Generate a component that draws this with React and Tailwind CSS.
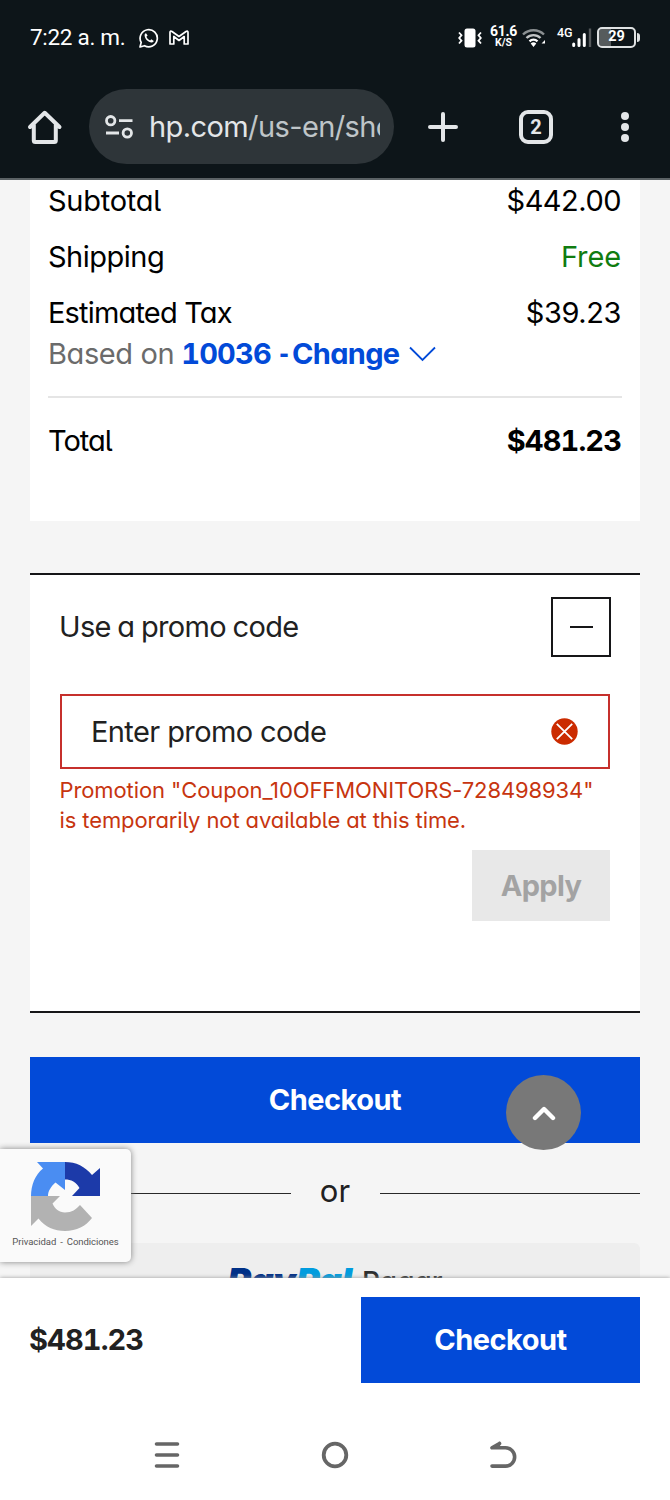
const hp = "font-['Inter','Liberation_Sans',sans-serif] [font-feature-settings:'cv11','cv05']";
const bold = "font-bold [font-feature-settings:'cv11','tnum']";
const roboto = "font-['Roboto','Liberation_Sans',sans-serif]";

function StatusBar() {
  return (
    <div className={`${roboto} flex h-[75px] items-center pl-[30px] pr-[30px] text-white`}>
      <span className="w-[109px] whitespace-nowrap text-[22.5px] tracking-[-0.3px] leading-none">7:22 a. m.</span>
      <svg className="h-5 w-5" viewBox="0 0 20 20" fill="none" stroke="#fff" strokeWidth="1.7">
        <path d="M1 19l1.2-4.6a8.6 8.6 0 1 1 3.3 3.3z" strokeLinejoin="round" />
        <path d="M7 5.2c-.9.3-1.5 1.2-1.4 2.2.3 3.600 3.400 6.700 7 7 1 .1 1.900-.5 2.200-1.400l-2.500-1.700-1.200 1.200c-1.700-.7-3-2-3.700-3.700l1.200-1.200z" fill="#fff" stroke="none" />
      </svg>
      <svg className="ml-[10px] h-4 w-5" viewBox="0 0 20 16" fill="none" stroke="#fff" strokeWidth="1.7" strokeLinejoin="round">
        <path d="M1 14V2.500Q1 .5 3 1.500L10 6.500l7-5Q19 .5 19 2.500V14h-3.800V6.500L10 10.500 4.800 6.500V14z" />
      </svg>
      <div className="ml-auto flex items-center">
        <svg className="-ml-[2px] mr-[2px] h-5 w-6" viewBox="0 0 24 20" fill="none" stroke="#fff" strokeWidth="1.8">
          <rect x="6.500" y="0.500" width="11" height="19" rx="2.500" fill="#fff" stroke="none" />
          <path d="M1 4.500l2.500 2.700L1.200 10l2.300 2.700L1 15.500M23 4.500l-2.500 2.700 2.300 2.800-2.300 2.700 2.500 2.800" />
        </svg>
        <div className="ml-[5px] flex h-[25px] w-[29px] flex-col items-center font-bold">
          <span className="text-[14px] leading-[13px] tracking-[-0.3px]">61.6</span>
          <span className="text-[10.500px] leading-[9px]">K/S</span>
        </div>
        <svg className="ml-[4px] mr-[1px] h-5 w-6" viewBox="0 0 24 20" fill="none" strokeWidth="2.400">
          <path d="M1 6.500a15 15 0 0 1 21 0" stroke="#8b9092" />
          <path d="M4.500 10a10 10 0 0 1 14 0" stroke="#c2c5c6" />
          <path d="M7.500 13.300a6 6 0 0 1 8 0" stroke="#fff" />
          <path d="M8.700 15.500q2.800-2.300 5.600 0L11.500 19zM19.500 15.500L23 12v3.500z" fill="#fff" />
        </svg>
        <div className="ml-[10px] flex h-[21px] w-[35px]">
          <span className="text-[12.500px] font-medium leading-[11px]">4G</span>
          <svg className="-ml-[1px] h-[21px] w-5 shrink-0" viewBox="0 0 20 21">
            <path d="M1.700 18.500V17M7 18.500V12.500M12.300 18.500V7.500" stroke="#fff" strokeWidth="3" strokeLinecap="round" />
            <path d="M18 20V1.500" stroke="#55595b" strokeWidth="2.400" />
          </svg>
        </div>
        <div className="ml-[5px] flex items-center">
          <div className="flex h-[21px] w-[39px] items-center justify-center rounded-[5px] border-2 border-[#dfe2e3] bg-[linear-gradient(90deg,#565b5d_33%,transparent_33%)] bg-clip-padding">
            <span className="text-[14.500px] font-bold leading-none">29</span>
          </div>
          <div className="ml-px h-[9px] w-[3px] rounded-r bg-[#dfe2e3]" />
        </div>
      </div>
    </div>
  );
}

function BrowserBar() {
  return (
    <div className="flex h-[103px] items-center">
      <svg className="ml-[27px] h-9 w-9" viewBox="0 0 36 36" fill="none" stroke="#e3e6e8" strokeWidth="4" strokeLinejoin="round" strokeLinecap="round">
        <path d="M3 18L17.700 3.800 32.500 18M6.800 16v15.500q0 1.500 1.500 1.500h19q1.500 0 1.500-1.500V16" />
      </svg>
      <div className="ml-[26px] flex h-[75px] w-[305px] items-center rounded-full bg-[#2e3539] pl-4">
        <svg className="h-6 w-7" viewBox="0 0 28 24" fill="none" stroke="#e3e6e8" strokeWidth="2.800">
          <circle cx="5.700" cy="5.700" r="4.200" />
          <circle cx="22.300" cy="18" r="4.200" />
          <path d="M14 5.700h13.500M1 18h13" />
        </svg>
        <div className="ml-4 w-[231px] overflow-hidden whitespace-nowrap font-['Inter',sans-serif] text-[29px] leading-[40px] tracking-[-0.600px] text-[#bfc5c8]">
          <span className="text-[#e3e6e8]">hp.com</span>/us-en/sho
        </div>
      </div>
      <svg className="ml-[34px] h-[30px] w-[30px]" viewBox="0 0 30 30" stroke="#e3e6e8" strokeWidth="4" strokeLinecap="round">
        <path d="M15 2v26M2 15h26" />
      </svg>
      <div className={`${roboto} ml-[61px] flex h-[34px] w-[34px] items-center justify-center rounded-[9px] border-4 border-[#e3e6e8] text-[20px] font-bold leading-none text-[#e3e6e8]`}>2</div>
      <svg className="ml-[68px] h-[30px] w-2" viewBox="0 0 8 30" fill="#e3e6e8">
        <circle cx="4" cy="4" r="4" /><circle cx="4" cy="15" r="4" /><circle cx="4" cy="26" r="4" />
      </svg>
    </div>
  );
}

function Row({ label, value, valueClass, labelClass, className }) {
  return (
    <div className={`flex h-10 items-center justify-between ${className}`}>
      <span className={labelClass}>{label}</span>
      <span className={valueClass}>{value}</span>
    </div>
  );
}

function Summary() {
  return (
    <section className="mx-[30px] h-[341px] bg-white pl-[18px] pr-[18px] pt-[1px] text-[29px] leading-10 text-black">
      <Row label="Subtotal" value="$442.00" labelClass="tracking-[-0.26px]" valueClass="mr-px tracking-[-0.5px]" />
      <Row className="mt-4" label="Shipping" value="Free" labelClass="tracking-[-0.5px]" valueClass="mr-px tracking-[-0.1px] text-[#107c10]" />
      <Row className="mt-4" label="Estimated Tax" value="$39.23" labelClass="tracking-[-0.82px]" valueClass="mr-px tracking-[-0.4px]" />
      <div className="mt-[1px] flex h-10 items-center whitespace-nowrap">
        <span className="tracking-[-0.4px] text-[#6b6b6b]">Based on</span>
        <span className={`${bold} ml-[7px] text-[#024ad8]`}>
          <span className="tracking-[-0.8px]">10036</span>
          <span className="ml-[6px] inline-block w-[9px] origin-left scale-x-75">-</span>
          <span className="ml-[6px] tracking-[-0.65px]">Change</span>
        </span>
        <svg className="ml-[10px] h-4 w-[27px]" viewBox="0 0 27 16" fill="none" stroke="#024ad8" strokeWidth="1.800"><path d="M1 1.500l12.500 12.500L26 1.500" /></svg>
      </div>
      <div className="mt-[22px] h-[2px] bg-[#e5e5e5]" />
      <Row className="mt-[22.500px]" label="Total" value="$481.23" labelClass="tracking-[-1px]" valueClass={`${bold} mr-px tracking-[-0.9px]`} />
    </section>
  );
}

function Promo() {
  return (
    <section className="mx-[30px] mt-[52px] h-[440px] border-y-2 border-[#161618] bg-white px-[30px] pt-[22px] text-[#212121]">
      <div className="flex h-[60px] items-center justify-between text-[29px]">
        <span className="-ml-px tracking-[-0.65px] [word-spacing:-1px]">Use a promo code</span>
        <button className="-mr-px flex h-[60px] w-[60px] items-center justify-center border-2 border-[#161618]"><span className="h-[2px] w-[23px] bg-[#161618]" /></button>
      </div>
      <div className="mt-[37px] flex h-[75px] items-center justify-between border-2 border-[#c6302c] pl-[29px] pr-[31px] text-[29px]">
        <span className="tracking-[-0.6px]">Enter promo code</span>
        <svg className="-mr-px h-[27px] w-[27px]" viewBox="0 0 27 27"><circle cx="13.500" cy="13.500" r="13.200" fill="#cb2b00" /><path d="M5.800 5.800l15.400 15.400M21.200 5.800L5.800 21.200" stroke="#fff" strokeWidth="1.800" /></svg>
      </div>
      <p className="-ml-[0.500px] mt-[6px] whitespace-nowrap text-[22px] leading-[30px] tracking-[-0.1px] text-[#c7350f]">Promotion "Coupon_10OFFMONITORS-728498934"<br />is temporarily not available at this time.</p>
      <button className="ml-auto mt-[15px] flex h-[71px] w-[138px] items-center justify-center bg-[#e8e8e8] text-[29px] font-bold tracking-[-0.7px] text-[#a3a3a3] [font-feature-settings:'cv11']">Apply</button>
    </section>
  );
}

function Recaptcha() {
  return (
    <div className="absolute left-0 top-[1149px] flex h-[113px] w-[131px] flex-col items-center rounded-r-[5px] bg-[#fafafa] pt-3 shadow-[0_0_6px_#808080]">
      <svg className="mr-[2px] h-[71px] w-[70px]" viewBox="0 0 70 71">
        <path d="M35 1H7l6 6.500C5 14 1 24 1 35h17c0-5 3-9.500 7.500-13.500L35 29z" fill="#4a8df2" />
        <path d="M35 1c11 0 20 4.500 27 13L70 7v28H42l7.500-8c-3-6-8.500-8.500-14.500-8.500z" fill="#1c3aa9" />
        <path d="M1 35h29l-7.500 7.500C25 48 29 51.500 35 51.500c7 0 11-3 15-7.500L62 57C56 65 46.500 70 35 70 24.500 70 15 66 8.500 57.500L1 65z" fill="#b2b2b2" />
      </svg>
      <div className={`${roboto} mt-[4px] flex gap-[4px] whitespace-nowrap text-[9.500px] leading-3 tracking-[-0.05px] text-[#555]`}>
        <span>Privacidad</span><span>-</span><span>Condiciones</span>
      </div>
    </div>
  );
}

export default function App() {
  return (
    <div className={`${hp} relative flex h-[1500px] w-[670px] flex-col overflow-hidden bg-[#f5f5f5]`}>
      <header className="h-[180px] shrink-0 border-b-2 border-[#5b6265] bg-[#0d1519]">
        <StatusBar />
        <BrowserBar />
      </header>
      <main className="h-[1098px] shrink-0 overflow-hidden">
        <Summary />
        <Promo />
        <button className="mx-[30px] mt-[44px] flex h-[86px] w-[610px] items-center justify-center bg-[#024ad8] text-[29px] font-bold tracking-[-0.500px] text-white">Checkout</button>
        <div className="mx-[30px] mt-[28px] flex h-[44px] items-center text-[31px] leading-10 text-[#212121]">
          <div className="h-px flex-1 bg-[#292929]" />
          <span className="-mt-1 w-[89px] text-center">or</span>
          <div className="h-px flex-1 bg-[#292929]" />
        </div>
        <div className="mx-[30px] mt-[28px] flex h-[85px] items-start justify-center rounded-[6px] bg-[#eee] pt-[23px] leading-[30px]">
          <span className="text-[36px] font-black italic text-[#003087]">Pay</span>
          <span className="text-[36px] font-black italic tracking-[-0.5px] text-[#009cde]">Pal</span>
          <span className="ml-[9px] text-[28px] font-medium leading-[32px] text-[#2c2e2f]">Pagar</span>
        </div>
      </main>
      <footer className="z-10 h-[222px] shrink-0 bg-white shadow-[0_0_4px_#999]">
        <div className="flex h-[124px] items-center justify-between px-[30px] text-[29px] font-bold text-[#212121]">
          <span className={`${bold} -ml-px tracking-[-0.9px]`}>$481.23</span>
          <button className="flex h-[86px] w-[279px] items-center justify-center bg-[#024ad8] tracking-[-0.500px] text-white">Checkout</button>
        </div>
        <nav className="flex h-[98px] items-center justify-center gap-[140px] pt-[8px]">
          <svg className="h-7 w-7" viewBox="0 0 28 28" stroke="#666" strokeWidth="3.600" strokeLinecap="round"><path d="M3.500 3h21M3.500 14h21M3.500 25h21" /></svg>
          <svg className="h-7 w-7" viewBox="0 0 28 28" fill="none" stroke="#666" strokeWidth="3.800"><circle cx="14" cy="14" r="11.300" /></svg>
          <svg className="h-7 w-7" viewBox="0 0 28 28" fill="none" stroke="#666" strokeWidth="3.600" strokeLinecap="round" strokeLinejoin="round"><path d="M10.500 2.500L3 6.800h13.500a9 9 0 0 1 0 18.300H3M10.500 2.500L8 6" /></svg>
        </nav>
      </footer>
      <Recaptcha />
      <button className="absolute left-[506px] top-[1075px] flex h-[75px] w-[75px] items-center justify-center rounded-full bg-[#787878]">
        <svg className="h-[16px] w-6" viewBox="0 0 24 16" fill="none" stroke="#fff" strokeWidth="4.400" strokeLinecap="round" strokeLinejoin="round"><path d="M3 13l9-9 9 9" /></svg>
      </button>
    </div>
  );
}
